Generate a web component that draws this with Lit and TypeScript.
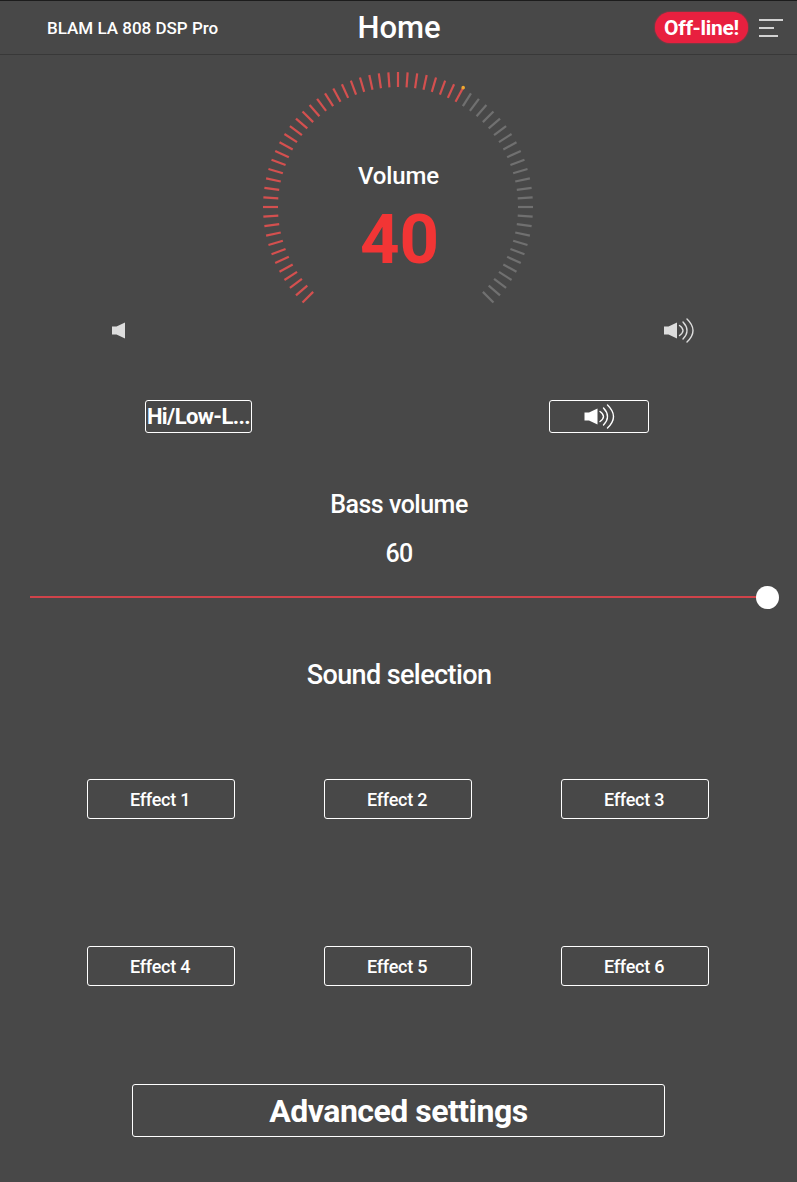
import { LitElement, html, css, svg } from "lit";
import { customElement } from "lit/decorators.js";

const CX = 135, CY = 135;
const TICKS = 67, VALUE = 40;

const speaker = svg`<path d="M0 8.500h4.500L13 4.500v16l-8.500-4H0z" fill="currentColor"/>`;
const waves = svg`<g fill="none" stroke="currentColor" stroke-width="1.400" stroke-linecap="round"><path d="M15.500 7.500Q22.500 12.500 15.500 17.500"/><path d="M19 4Q27 12.500 19 21"/><path d="M23 1Q35 12.500 23 24"/></g>`;

@customElement("app-root")
export class AppRoot extends LitElement {
  static styles = css`
    :host { display: block; width: 797px; height: 1182px; background: #484848; color: #fff; font-family: Roboto, "Liberation Sans", sans-serif; overflow: hidden; }
    .header { height: 53px; border-top: 1px solid #1c1c1c; border-bottom: 1px solid #383838; display: grid; grid-template-columns: 1fr auto 1fr; align-items: center; box-sizing: content-box; }
    .device { padding-left: 47px; font-size: 17px; font-weight: 500; }
    .home { font-size: 31px; font-weight: 500; padding-left: 1px; }
    .right { display: flex; justify-content: flex-end; align-items: center; gap: 11px; padding-right: 14px; }
    .badge { background: #e8203f; border-radius: 16px; height: 31px; width: 93px; display: flex; align-items: center; justify-content: center; font-size: 21px; font-weight: 700; box-shadow: 0 0 2px #e8203f; letter-spacing: -0.3px; }
    .menu { display: block; }
    .gauge { position: relative; width: 271px; height: 240px; margin: 17px 0 0 263px; }
    .gauge svg { display: block; }
    .gauge-text { position: absolute; left: 0; right: 0; top: 89px; text-align: center; }
    .gauge-label { font-size: 24px; line-height: 30px; font-weight: 500; letter-spacing: -0.1px; }
    .gauge-value { font-size: 69px; line-height: 70px; font-weight: 700; color: #f23535; margin-top: 14px; padding-left: 2px; }
    .icons { display: flex; justify-content: space-between; padding: 0 103px 0 112px; height: 25px; margin-top: 6px; color: #ddd; align-items: center; }
    .row { display: flex; justify-content: space-between; padding: 0 148px 0 145px; margin-top: 57px; }
    button { font-family: inherit; background: transparent; color: #fff; border: 1px solid #fff; border-radius: 3px; padding: 0; margin: 0; display: flex; align-items: center; justify-content: center; box-sizing: border-box; }
    .hilow { width: 107px; height: 33px; font-size: 22px; font-weight: 700; white-space: nowrap; letter-spacing: -0.6px; }
    .snd { width: 100px; height: 33px; }
    .center { text-align: center; font-weight: 500; padding-left: 1px; }
    .bass { font-size: 25px; line-height: 30px; margin-top: 57px; letter-spacing: -0.5px; }
    .num { font-size: 25px; line-height: 30px; margin-top: 19px; letter-spacing: -0.7px; }
    .slider { position: relative; height: 24px; margin: 16px 0 0 30px; width: 750px; display: flex; align-items: center; }
    .track { height: 2px; width: 738px; background: #d0434a; }
    .thumb { position: absolute; left: 726px; top: 1px; width: 23px; height: 23px; border-radius: 50%; background: #fff; }
    .sound { font-size: 27px; line-height: 32px; margin-top: 50px; letter-spacing: -0.6px; }
    .effects { display: grid; grid-template-columns: repeat(3, 148px); column-gap: 89px; row-gap: 127px; padding-left: 87px; margin-top: 88px; }
    .effects button { height: 40px; font-size: 18px; font-weight: 500; letter-spacing: -0.25px; padding-right: 2px; }
    .adv { width: 533px; height: 53px; margin: 98px 0 0 132px; font-size: 32px; font-weight: 700; letter-spacing: -0.5px; }
  `;

  private ticks() {
    const out = [];
    for (let i = 0; i < TICKS; i++) {
      const a = ((-135 + (i * 270) / (TICKS - 1)) * Math.PI) / 180;
      const s = Math.sin(a), c = -Math.cos(a);
      const on = i <= VALUE;
      out.push(svg`<line x1=${CX + 120 * s} y1=${CY + 120 * c} x2=${CX + 135 * s} y2=${CY + 135 * c}
        stroke=${on ? "#d4504f" : "#707070"} stroke-width="2.200"/>`);
    }
    const a = ((-135 + (VALUE * 270) / (TICKS - 1)) * Math.PI) / 180;
    out.push(svg`<circle cx=${CX + 136 * Math.sin(a)} cy=${CY - 136 * Math.cos(a)} r="1.800" fill="#f0a830"/>`);
    return out;
  }

  render() {
    return html`
      <div class="header">
        <div class="device">BLAM LA 808 DSP Pro</div>
        <div class="home">Home</div>
        <div class="right">
          <div class="badge">Off-line!</div>
          <svg class="menu" width="24" height="18" viewBox="0 0 24 18" stroke="#fff" stroke-width="1.500">
            <path d="M0 1h24M0 9h15M0 17h19"/>
          </svg>
        </div>
      </div>
      <div class="gauge">
        <svg width="271" height="240" viewBox="0 0 271 240">${this.ticks()}</svg>
        <div class="gauge-text">
          <div class="gauge-label">Volume</div>
          <div class="gauge-value">40</div>
        </div>
      </div>
      <div class="icons">
        <svg width="14" height="25" viewBox="0 0 14 25">${speaker}</svg>
        <svg width="30" height="25" viewBox="0 0 30 25">${speaker}${waves}</svg>
      </div>
      <div class="row">
        <button class="hilow">Hi/Low-L...</button>
        <button class="snd"><svg width="31" height="25" viewBox="0 0 30 25">${speaker}${waves}</svg></button>
      </div>
      <div class="center bass">Bass volume</div>
      <div class="center num">60</div>
      <div class="slider"><div class="track"></div><div class="thumb"></div></div>
      <div class="center sound">Sound selection</div>
      <div class="effects">
        ${[1, 2, 3, 4, 5, 6].map((n) => html`<button>Effect ${n}</button>`)}
      </div>
      <button class="adv">Advanced settings</button>
    `;
  }
}
